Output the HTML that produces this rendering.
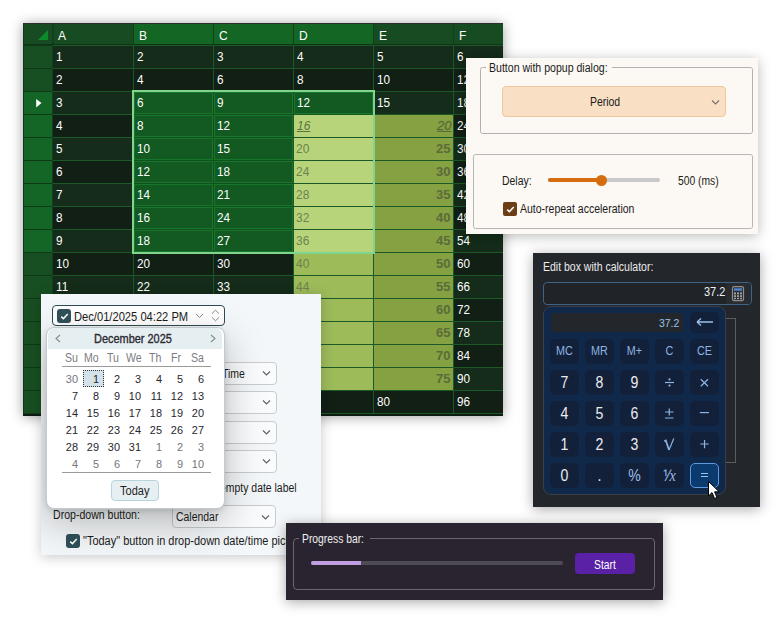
<!DOCTYPE html><html><head><meta charset="utf-8"><style>
*{box-sizing:border-box;margin:0;padding:0}
html,body{width:783px;height:628px;overflow:hidden;background:#fff;font-family:"Liberation Sans",sans-serif;position:relative}
.a{position:absolute}
.t{position:absolute;white-space:nowrap;transform-origin:0 0}

</style></head><body>
<div class="a" style="left:23px;top:23px;width:480px;height:393px;overflow:hidden;background:#163d1d;box-shadow:0 1px 12px rgba(0,0,0,0.38)">
<div class="a" style="left:0px;top:0px;width:480px;height:1px;background:#2e2e2e;"></div>
<div class="a" style="left:0px;top:1px;width:480px;height:21px;background:#123f1c;"></div>
<div class="a" style="left:0px;top:1px;width:29px;height:20px;background:#174b22;"></div>
<div class="a" style="left:31px;top:1px;width:79px;height:20px;background:#174b22;"></div>
<div class="t" style="left:35px;top:6.5px;font-size:12px;line-height:12px;color:#fff;">A</div>
<div class="a" style="left:111px;top:1px;width:79px;height:20px;background:#136624;"></div>
<div class="t" style="left:116px;top:6.5px;font-size:12px;line-height:12px;color:#fff;">B</div>
<div class="a" style="left:191px;top:1px;width:79px;height:20px;background:#136624;"></div>
<div class="t" style="left:196px;top:6.5px;font-size:12px;line-height:12px;color:#fff;">C</div>
<div class="a" style="left:271px;top:1px;width:79px;height:20px;background:#136624;"></div>
<div class="t" style="left:276px;top:6.5px;font-size:12px;line-height:12px;color:#fff;">D</div>
<div class="a" style="left:351px;top:1px;width:79px;height:20px;background:#174b22;"></div>
<div class="t" style="left:356px;top:6.5px;font-size:12px;line-height:12px;color:#fff;">E</div>
<div class="a" style="left:431px;top:1px;width:49px;height:20px;background:#174b22;"></div>
<div class="t" style="left:436px;top:6.5px;font-size:12px;line-height:12px;color:#fff;">F</div>
<svg class="a" style="left:15px;top:7px" width="10" height="10"><polygon points="10,0 10,10 0,10" fill="#0d8a2c"/></svg>
<div class="a" style="left:0px;top:21px;width:480px;height:1px;background:#0f3317;"></div>
<div class="a" style="left:0px;top:22px;width:30px;height:23px;background:#0f3a18;"></div>
<div class="a" style="left:0px;top:23px;width:30px;height:22px;background:#174f22;"></div>
<div class="a" style="left:30px;top:22px;width:450px;height:1px;background:#1b5a26;"></div>
<div class="a" style="left:30px;top:23px;width:80px;height:22px;background:#142c19;"></div>
<div class="t" style="left:33px;top:27px;font-size:13px;line-height:13px;color:#fff;transform:scaleX(0.9)">1</div>
<div class="a" style="left:110px;top:22px;width:1px;height:23px;background:#1b5a26;"></div>
<div class="a" style="left:111px;top:23px;width:79px;height:22px;background:#142c19;"></div>
<div class="t" style="left:114px;top:27px;font-size:13px;line-height:13px;color:#fff;transform:scaleX(0.9)">2</div>
<div class="a" style="left:190px;top:22px;width:1px;height:23px;background:#1b5a26;"></div>
<div class="a" style="left:191px;top:23px;width:79px;height:22px;background:#142c19;"></div>
<div class="t" style="left:194px;top:27px;font-size:13px;line-height:13px;color:#fff;transform:scaleX(0.9)">3</div>
<div class="a" style="left:270px;top:22px;width:1px;height:23px;background:#1b5a26;"></div>
<div class="a" style="left:271px;top:23px;width:79px;height:22px;background:#142c19;"></div>
<div class="t" style="left:274px;top:27px;font-size:13px;line-height:13px;color:#fff;transform:scaleX(0.9)">4</div>
<div class="a" style="left:350px;top:22px;width:1px;height:23px;background:#1b5a26;"></div>
<div class="a" style="left:351px;top:23px;width:79px;height:22px;background:#142c19;"></div>
<div class="t" style="left:354px;top:27px;font-size:13px;line-height:13px;color:#fff;transform:scaleX(0.9)">5</div>
<div class="a" style="left:430px;top:22px;width:1px;height:23px;background:#1b5a26;"></div>
<div class="a" style="left:431px;top:23px;width:49px;height:22px;background:#142c19;"></div>
<div class="t" style="left:434px;top:27px;font-size:13px;line-height:13px;color:#fff;transform:scaleX(0.9)">6</div>
<div class="a" style="left:0px;top:45px;width:30px;height:23px;background:#0f3a18;"></div>
<div class="a" style="left:0px;top:46px;width:30px;height:22px;background:#174f22;"></div>
<div class="a" style="left:30px;top:45px;width:450px;height:1px;background:#1b5a26;"></div>
<div class="a" style="left:30px;top:46px;width:80px;height:22px;background:#111f15;"></div>
<div class="t" style="left:33px;top:50px;font-size:13px;line-height:13px;color:#fff;transform:scaleX(0.9)">2</div>
<div class="a" style="left:110px;top:45px;width:1px;height:23px;background:#1b5a26;"></div>
<div class="a" style="left:111px;top:46px;width:79px;height:22px;background:#111f15;"></div>
<div class="t" style="left:114px;top:50px;font-size:13px;line-height:13px;color:#fff;transform:scaleX(0.9)">4</div>
<div class="a" style="left:190px;top:45px;width:1px;height:23px;background:#1b5a26;"></div>
<div class="a" style="left:191px;top:46px;width:79px;height:22px;background:#111f15;"></div>
<div class="t" style="left:194px;top:50px;font-size:13px;line-height:13px;color:#fff;transform:scaleX(0.9)">6</div>
<div class="a" style="left:270px;top:45px;width:1px;height:23px;background:#1b5a26;"></div>
<div class="a" style="left:271px;top:46px;width:79px;height:22px;background:#111f15;"></div>
<div class="t" style="left:274px;top:50px;font-size:13px;line-height:13px;color:#fff;transform:scaleX(0.9)">8</div>
<div class="a" style="left:350px;top:45px;width:1px;height:23px;background:#1b5a26;"></div>
<div class="a" style="left:351px;top:46px;width:79px;height:22px;background:#111f15;"></div>
<div class="t" style="left:354px;top:50px;font-size:13px;line-height:13px;color:#fff;transform:scaleX(0.9)">10</div>
<div class="a" style="left:430px;top:45px;width:1px;height:23px;background:#1b5a26;"></div>
<div class="a" style="left:431px;top:46px;width:49px;height:22px;background:#111f15;"></div>
<div class="t" style="left:434px;top:50px;font-size:13px;line-height:13px;color:#fff;transform:scaleX(0.9)">12</div>
<div class="a" style="left:0px;top:68px;width:30px;height:23px;background:#0f3a18;"></div>
<div class="a" style="left:0px;top:69px;width:30px;height:22px;background:#136625;"></div>
<svg class="a" style="left:12px;top:75px" width="8" height="11"><polygon points="1.2,1 6.5,5 1.2,9.5" fill="#fff"/></svg>
<div class="a" style="left:30px;top:68px;width:450px;height:1px;background:#1b5a26;"></div>
<div class="a" style="left:30px;top:69px;width:80px;height:22px;background:#142c19;"></div>
<div class="t" style="left:33px;top:73px;font-size:13px;line-height:13px;color:#fff;transform:scaleX(0.9)">3</div>
<div class="a" style="left:110px;top:68px;width:1px;height:23px;background:#1b5a26;"></div>
<div class="a" style="left:111px;top:68px;width:79px;height:23px;background:#11501f;"></div>
<div class="a" style="left:111px;top:69px;width:79px;height:22px;background:#135a22;box-shadow:inset 0 0 0 1px #18762a"></div>
<div class="t" style="left:114px;top:73px;font-size:13px;line-height:13px;color:#fff;transform:scaleX(0.9)">6</div>
<div class="a" style="left:190px;top:68px;width:1px;height:23px;background:#1b5a26;"></div>
<div class="a" style="left:190px;top:68px;width:80px;height:23px;background:#11501f;"></div>
<div class="a" style="left:191px;top:69px;width:79px;height:22px;background:#135a22;box-shadow:inset 0 0 0 1px #18762a"></div>
<div class="t" style="left:194px;top:73px;font-size:13px;line-height:13px;color:#fff;transform:scaleX(0.9)">9</div>
<div class="a" style="left:270px;top:68px;width:1px;height:23px;background:#1b5a26;"></div>
<div class="a" style="left:270px;top:68px;width:80px;height:23px;background:#11501f;"></div>
<div class="a" style="left:271px;top:69px;width:79px;height:22px;background:#135a22;box-shadow:inset 0 0 0 1px #18762a"></div>
<div class="t" style="left:274px;top:73px;font-size:13px;line-height:13px;color:#fff;transform:scaleX(0.9)">12</div>
<div class="a" style="left:350px;top:68px;width:1px;height:23px;background:#1b5a26;"></div>
<div class="a" style="left:351px;top:69px;width:79px;height:22px;background:#142c19;"></div>
<div class="t" style="left:354px;top:73px;font-size:13px;line-height:13px;color:#fff;transform:scaleX(0.9)">15</div>
<div class="a" style="left:430px;top:68px;width:1px;height:23px;background:#1b5a26;"></div>
<div class="a" style="left:431px;top:69px;width:49px;height:22px;background:#142c19;"></div>
<div class="t" style="left:434px;top:73px;font-size:13px;line-height:13px;color:#fff;transform:scaleX(0.9)">18</div>
<div class="a" style="left:0px;top:91px;width:30px;height:23px;background:#0f3a18;"></div>
<div class="a" style="left:0px;top:92px;width:30px;height:22px;background:#136625;"></div>
<div class="a" style="left:30px;top:91px;width:450px;height:1px;background:#1b5a26;"></div>
<div class="a" style="left:30px;top:92px;width:80px;height:22px;background:#111f15;"></div>
<div class="t" style="left:33px;top:96px;font-size:13px;line-height:13px;color:#fff;transform:scaleX(0.9)">4</div>
<div class="a" style="left:110px;top:91px;width:1px;height:23px;background:#1b5a26;"></div>
<div class="a" style="left:111px;top:91px;width:79px;height:23px;background:#11501f;"></div>
<div class="a" style="left:111px;top:92px;width:79px;height:22px;background:#135a22;box-shadow:inset 0 0 0 1px #18762a"></div>
<div class="t" style="left:114px;top:96px;font-size:13px;line-height:13px;color:#fff;transform:scaleX(0.9)">8</div>
<div class="a" style="left:190px;top:91px;width:1px;height:23px;background:#1b5a26;"></div>
<div class="a" style="left:190px;top:91px;width:80px;height:23px;background:#11501f;"></div>
<div class="a" style="left:191px;top:92px;width:79px;height:22px;background:#135a22;box-shadow:inset 0 0 0 1px #18762a"></div>
<div class="t" style="left:194px;top:96px;font-size:13px;line-height:13px;color:#fff;transform:scaleX(0.9)">12</div>
<div class="a" style="left:270px;top:91px;width:1px;height:23px;background:#1b5a26;"></div>
<div class="a" style="left:271px;top:92px;width:79px;height:22px;background:#b7d47b;"></div>
<div class="t" style="left:274px;top:96px;font-size:13px;line-height:13px;color:#5f7342;font-style:italic;text-decoration:underline;transform:scaleX(0.92)">16</div>
<div class="a" style="left:350px;top:91px;width:1px;height:23px;background:#1b5a26;"></div>
<div class="a" style="left:351px;top:92px;width:79px;height:22px;background:#86a142;"></div>
<div class="t" style="left:351px;width:77.5px;text-align:right;top:96px;font-size:13px;line-height:13px;color:#5b6b3a;font-style:italic;text-decoration:underline;-webkit-text-stroke:0.3px #5b6b3a;">20</div>
<div class="a" style="left:430px;top:91px;width:1px;height:23px;background:#1b5a26;"></div>
<div class="a" style="left:431px;top:92px;width:49px;height:22px;background:#111f15;"></div>
<div class="t" style="left:434px;top:96px;font-size:13px;line-height:13px;color:#fff;transform:scaleX(0.9)">24</div>
<div class="a" style="left:0px;top:114px;width:30px;height:23px;background:#0f3a18;"></div>
<div class="a" style="left:0px;top:115px;width:30px;height:22px;background:#136625;"></div>
<div class="a" style="left:30px;top:114px;width:450px;height:1px;background:#1b5a26;"></div>
<div class="a" style="left:30px;top:115px;width:80px;height:22px;background:#142c19;"></div>
<div class="t" style="left:33px;top:119px;font-size:13px;line-height:13px;color:#fff;transform:scaleX(0.9)">5</div>
<div class="a" style="left:110px;top:114px;width:1px;height:23px;background:#1b5a26;"></div>
<div class="a" style="left:111px;top:114px;width:79px;height:23px;background:#11501f;"></div>
<div class="a" style="left:111px;top:115px;width:79px;height:22px;background:#135a22;box-shadow:inset 0 0 0 1px #18762a"></div>
<div class="t" style="left:114px;top:119px;font-size:13px;line-height:13px;color:#fff;transform:scaleX(0.9)">10</div>
<div class="a" style="left:190px;top:114px;width:1px;height:23px;background:#1b5a26;"></div>
<div class="a" style="left:190px;top:114px;width:80px;height:23px;background:#11501f;"></div>
<div class="a" style="left:191px;top:115px;width:79px;height:22px;background:#135a22;box-shadow:inset 0 0 0 1px #18762a"></div>
<div class="t" style="left:194px;top:119px;font-size:13px;line-height:13px;color:#fff;transform:scaleX(0.9)">15</div>
<div class="a" style="left:270px;top:114px;width:1px;height:23px;background:#1b5a26;"></div>
<div class="a" style="left:271px;top:115px;width:79px;height:22px;background:#b7d47b;"></div>
<div class="t" style="left:273px;top:119px;font-size:13px;line-height:13px;color:#6d834b;transform:scaleX(0.92)">20</div>
<div class="a" style="left:350px;top:114px;width:1px;height:23px;background:#1b5a26;"></div>
<div class="a" style="left:351px;top:115px;width:79px;height:22px;background:#86a142;"></div>
<div class="t" style="left:351px;width:76.5px;text-align:right;top:119px;font-size:13px;line-height:13px;color:#5b6b3a;font-weight:bold;">25</div>
<div class="a" style="left:430px;top:114px;width:1px;height:23px;background:#1b5a26;"></div>
<div class="a" style="left:431px;top:115px;width:49px;height:22px;background:#142c19;"></div>
<div class="t" style="left:434px;top:119px;font-size:13px;line-height:13px;color:#fff;transform:scaleX(0.9)">30</div>
<div class="a" style="left:0px;top:137px;width:30px;height:23px;background:#0f3a18;"></div>
<div class="a" style="left:0px;top:138px;width:30px;height:22px;background:#136625;"></div>
<div class="a" style="left:30px;top:137px;width:450px;height:1px;background:#1b5a26;"></div>
<div class="a" style="left:30px;top:138px;width:80px;height:22px;background:#111f15;"></div>
<div class="t" style="left:33px;top:142px;font-size:13px;line-height:13px;color:#fff;transform:scaleX(0.9)">6</div>
<div class="a" style="left:110px;top:137px;width:1px;height:23px;background:#1b5a26;"></div>
<div class="a" style="left:111px;top:137px;width:79px;height:23px;background:#11501f;"></div>
<div class="a" style="left:111px;top:138px;width:79px;height:22px;background:#135a22;box-shadow:inset 0 0 0 1px #18762a"></div>
<div class="t" style="left:114px;top:142px;font-size:13px;line-height:13px;color:#fff;transform:scaleX(0.9)">12</div>
<div class="a" style="left:190px;top:137px;width:1px;height:23px;background:#1b5a26;"></div>
<div class="a" style="left:190px;top:137px;width:80px;height:23px;background:#11501f;"></div>
<div class="a" style="left:191px;top:138px;width:79px;height:22px;background:#135a22;box-shadow:inset 0 0 0 1px #18762a"></div>
<div class="t" style="left:194px;top:142px;font-size:13px;line-height:13px;color:#fff;transform:scaleX(0.9)">18</div>
<div class="a" style="left:270px;top:137px;width:1px;height:23px;background:#1b5a26;"></div>
<div class="a" style="left:271px;top:138px;width:79px;height:22px;background:#b7d47b;"></div>
<div class="t" style="left:273px;top:142px;font-size:13px;line-height:13px;color:#6d834b;transform:scaleX(0.92)">24</div>
<div class="a" style="left:350px;top:137px;width:1px;height:23px;background:#1b5a26;"></div>
<div class="a" style="left:351px;top:138px;width:79px;height:22px;background:#86a142;"></div>
<div class="t" style="left:351px;width:76.5px;text-align:right;top:142px;font-size:13px;line-height:13px;color:#5b6b3a;font-weight:bold;">30</div>
<div class="a" style="left:430px;top:137px;width:1px;height:23px;background:#1b5a26;"></div>
<div class="a" style="left:431px;top:138px;width:49px;height:22px;background:#111f15;"></div>
<div class="t" style="left:434px;top:142px;font-size:13px;line-height:13px;color:#fff;transform:scaleX(0.9)">36</div>
<div class="a" style="left:0px;top:160px;width:30px;height:23px;background:#0f3a18;"></div>
<div class="a" style="left:0px;top:161px;width:30px;height:22px;background:#136625;"></div>
<div class="a" style="left:30px;top:160px;width:450px;height:1px;background:#1b5a26;"></div>
<div class="a" style="left:30px;top:161px;width:80px;height:22px;background:#142c19;"></div>
<div class="t" style="left:33px;top:165px;font-size:13px;line-height:13px;color:#fff;transform:scaleX(0.9)">7</div>
<div class="a" style="left:110px;top:160px;width:1px;height:23px;background:#1b5a26;"></div>
<div class="a" style="left:111px;top:160px;width:79px;height:23px;background:#11501f;"></div>
<div class="a" style="left:111px;top:161px;width:79px;height:22px;background:#135a22;box-shadow:inset 0 0 0 1px #18762a"></div>
<div class="t" style="left:114px;top:165px;font-size:13px;line-height:13px;color:#fff;transform:scaleX(0.9)">14</div>
<div class="a" style="left:190px;top:160px;width:1px;height:23px;background:#1b5a26;"></div>
<div class="a" style="left:190px;top:160px;width:80px;height:23px;background:#11501f;"></div>
<div class="a" style="left:191px;top:161px;width:79px;height:22px;background:#135a22;box-shadow:inset 0 0 0 1px #18762a"></div>
<div class="t" style="left:194px;top:165px;font-size:13px;line-height:13px;color:#fff;transform:scaleX(0.9)">21</div>
<div class="a" style="left:270px;top:160px;width:1px;height:23px;background:#1b5a26;"></div>
<div class="a" style="left:271px;top:161px;width:79px;height:22px;background:#b7d47b;"></div>
<div class="t" style="left:273px;top:165px;font-size:13px;line-height:13px;color:#6d834b;transform:scaleX(0.92)">28</div>
<div class="a" style="left:350px;top:160px;width:1px;height:23px;background:#1b5a26;"></div>
<div class="a" style="left:351px;top:161px;width:79px;height:22px;background:#86a142;"></div>
<div class="t" style="left:351px;width:76.5px;text-align:right;top:165px;font-size:13px;line-height:13px;color:#5b6b3a;font-weight:bold;">35</div>
<div class="a" style="left:430px;top:160px;width:1px;height:23px;background:#1b5a26;"></div>
<div class="a" style="left:431px;top:161px;width:49px;height:22px;background:#142c19;"></div>
<div class="t" style="left:434px;top:165px;font-size:13px;line-height:13px;color:#fff;transform:scaleX(0.9)">42</div>
<div class="a" style="left:0px;top:183px;width:30px;height:23px;background:#0f3a18;"></div>
<div class="a" style="left:0px;top:184px;width:30px;height:22px;background:#136625;"></div>
<div class="a" style="left:30px;top:183px;width:450px;height:1px;background:#1b5a26;"></div>
<div class="a" style="left:30px;top:184px;width:80px;height:22px;background:#111f15;"></div>
<div class="t" style="left:33px;top:188px;font-size:13px;line-height:13px;color:#fff;transform:scaleX(0.9)">8</div>
<div class="a" style="left:110px;top:183px;width:1px;height:23px;background:#1b5a26;"></div>
<div class="a" style="left:111px;top:183px;width:79px;height:23px;background:#11501f;"></div>
<div class="a" style="left:111px;top:184px;width:79px;height:22px;background:#135a22;box-shadow:inset 0 0 0 1px #18762a"></div>
<div class="t" style="left:114px;top:188px;font-size:13px;line-height:13px;color:#fff;transform:scaleX(0.9)">16</div>
<div class="a" style="left:190px;top:183px;width:1px;height:23px;background:#1b5a26;"></div>
<div class="a" style="left:190px;top:183px;width:80px;height:23px;background:#11501f;"></div>
<div class="a" style="left:191px;top:184px;width:79px;height:22px;background:#135a22;box-shadow:inset 0 0 0 1px #18762a"></div>
<div class="t" style="left:194px;top:188px;font-size:13px;line-height:13px;color:#fff;transform:scaleX(0.9)">24</div>
<div class="a" style="left:270px;top:183px;width:1px;height:23px;background:#1b5a26;"></div>
<div class="a" style="left:271px;top:184px;width:79px;height:22px;background:#b7d47b;"></div>
<div class="t" style="left:273px;top:188px;font-size:13px;line-height:13px;color:#6d834b;transform:scaleX(0.92)">32</div>
<div class="a" style="left:350px;top:183px;width:1px;height:23px;background:#1b5a26;"></div>
<div class="a" style="left:351px;top:184px;width:79px;height:22px;background:#86a142;"></div>
<div class="t" style="left:351px;width:76.5px;text-align:right;top:188px;font-size:13px;line-height:13px;color:#5b6b3a;font-weight:bold;">40</div>
<div class="a" style="left:430px;top:183px;width:1px;height:23px;background:#1b5a26;"></div>
<div class="a" style="left:431px;top:184px;width:49px;height:22px;background:#111f15;"></div>
<div class="t" style="left:434px;top:188px;font-size:13px;line-height:13px;color:#fff;transform:scaleX(0.9)">48</div>
<div class="a" style="left:0px;top:206px;width:30px;height:23px;background:#0f3a18;"></div>
<div class="a" style="left:0px;top:207px;width:30px;height:22px;background:#136625;"></div>
<div class="a" style="left:30px;top:206px;width:450px;height:1px;background:#1b5a26;"></div>
<div class="a" style="left:30px;top:207px;width:80px;height:22px;background:#142c19;"></div>
<div class="t" style="left:33px;top:211px;font-size:13px;line-height:13px;color:#fff;transform:scaleX(0.9)">9</div>
<div class="a" style="left:110px;top:206px;width:1px;height:23px;background:#1b5a26;"></div>
<div class="a" style="left:111px;top:206px;width:79px;height:23px;background:#11501f;"></div>
<div class="a" style="left:111px;top:207px;width:79px;height:22px;background:#135a22;box-shadow:inset 0 0 0 1px #18762a"></div>
<div class="t" style="left:114px;top:211px;font-size:13px;line-height:13px;color:#fff;transform:scaleX(0.9)">18</div>
<div class="a" style="left:190px;top:206px;width:1px;height:23px;background:#1b5a26;"></div>
<div class="a" style="left:190px;top:206px;width:80px;height:23px;background:#11501f;"></div>
<div class="a" style="left:191px;top:207px;width:79px;height:22px;background:#135a22;box-shadow:inset 0 0 0 1px #18762a"></div>
<div class="t" style="left:194px;top:211px;font-size:13px;line-height:13px;color:#fff;transform:scaleX(0.9)">27</div>
<div class="a" style="left:270px;top:206px;width:1px;height:23px;background:#1b5a26;"></div>
<div class="a" style="left:271px;top:207px;width:79px;height:22px;background:#b7d47b;"></div>
<div class="t" style="left:273px;top:211px;font-size:13px;line-height:13px;color:#6d834b;transform:scaleX(0.92)">36</div>
<div class="a" style="left:350px;top:206px;width:1px;height:23px;background:#1b5a26;"></div>
<div class="a" style="left:351px;top:207px;width:79px;height:22px;background:#86a142;"></div>
<div class="t" style="left:351px;width:76.5px;text-align:right;top:211px;font-size:13px;line-height:13px;color:#5b6b3a;font-weight:bold;">45</div>
<div class="a" style="left:430px;top:206px;width:1px;height:23px;background:#1b5a26;"></div>
<div class="a" style="left:431px;top:207px;width:49px;height:22px;background:#142c19;"></div>
<div class="t" style="left:434px;top:211px;font-size:13px;line-height:13px;color:#fff;transform:scaleX(0.9)">54</div>
<div class="a" style="left:0px;top:229px;width:30px;height:23px;background:#0f3a18;"></div>
<div class="a" style="left:0px;top:230px;width:30px;height:22px;background:#174f22;"></div>
<div class="a" style="left:30px;top:229px;width:450px;height:1px;background:#1b5a26;"></div>
<div class="a" style="left:30px;top:230px;width:80px;height:22px;background:#111f15;"></div>
<div class="t" style="left:33px;top:234px;font-size:13px;line-height:13px;color:#fff;transform:scaleX(0.9)">10</div>
<div class="a" style="left:110px;top:229px;width:1px;height:23px;background:#1b5a26;"></div>
<div class="a" style="left:111px;top:230px;width:79px;height:22px;background:#111f15;"></div>
<div class="t" style="left:114px;top:234px;font-size:13px;line-height:13px;color:#fff;transform:scaleX(0.9)">20</div>
<div class="a" style="left:190px;top:229px;width:1px;height:23px;background:#1b5a26;"></div>
<div class="a" style="left:191px;top:230px;width:79px;height:22px;background:#111f15;"></div>
<div class="t" style="left:194px;top:234px;font-size:13px;line-height:13px;color:#fff;transform:scaleX(0.9)">30</div>
<div class="a" style="left:270px;top:229px;width:1px;height:23px;background:#1b5a26;"></div>
<div class="a" style="left:271px;top:230px;width:79px;height:22px;background:#9ebb5a;"></div>
<div class="t" style="left:273px;top:234px;font-size:13px;line-height:13px;color:#6d834b;transform:scaleX(0.92)">40</div>
<div class="a" style="left:350px;top:229px;width:1px;height:23px;background:#1b5a26;"></div>
<div class="a" style="left:351px;top:230px;width:79px;height:22px;background:#86a142;"></div>
<div class="t" style="left:351px;width:76.5px;text-align:right;top:234px;font-size:13px;line-height:13px;color:#5b6b3a;font-weight:bold;">50</div>
<div class="a" style="left:430px;top:229px;width:1px;height:23px;background:#1b5a26;"></div>
<div class="a" style="left:431px;top:230px;width:49px;height:22px;background:#111f15;"></div>
<div class="t" style="left:434px;top:234px;font-size:13px;line-height:13px;color:#fff;transform:scaleX(0.9)">60</div>
<div class="a" style="left:0px;top:252px;width:30px;height:23px;background:#0f3a18;"></div>
<div class="a" style="left:0px;top:253px;width:30px;height:22px;background:#174f22;"></div>
<div class="a" style="left:30px;top:252px;width:450px;height:1px;background:#1b5a26;"></div>
<div class="a" style="left:30px;top:253px;width:80px;height:22px;background:#142c19;"></div>
<div class="t" style="left:33px;top:257px;font-size:13px;line-height:13px;color:#fff;transform:scaleX(0.9)">11</div>
<div class="a" style="left:110px;top:252px;width:1px;height:23px;background:#1b5a26;"></div>
<div class="a" style="left:111px;top:253px;width:79px;height:22px;background:#142c19;"></div>
<div class="t" style="left:114px;top:257px;font-size:13px;line-height:13px;color:#fff;transform:scaleX(0.9)">22</div>
<div class="a" style="left:190px;top:252px;width:1px;height:23px;background:#1b5a26;"></div>
<div class="a" style="left:191px;top:253px;width:79px;height:22px;background:#142c19;"></div>
<div class="t" style="left:194px;top:257px;font-size:13px;line-height:13px;color:#fff;transform:scaleX(0.9)">33</div>
<div class="a" style="left:270px;top:252px;width:1px;height:23px;background:#1b5a26;"></div>
<div class="a" style="left:271px;top:253px;width:79px;height:22px;background:#9ebb5a;"></div>
<div class="t" style="left:273px;top:257px;font-size:13px;line-height:13px;color:#6d834b;transform:scaleX(0.92)">44</div>
<div class="a" style="left:350px;top:252px;width:1px;height:23px;background:#1b5a26;"></div>
<div class="a" style="left:351px;top:253px;width:79px;height:22px;background:#86a142;"></div>
<div class="t" style="left:351px;width:76.5px;text-align:right;top:257px;font-size:13px;line-height:13px;color:#5b6b3a;font-weight:bold;">55</div>
<div class="a" style="left:430px;top:252px;width:1px;height:23px;background:#1b5a26;"></div>
<div class="a" style="left:431px;top:253px;width:49px;height:22px;background:#142c19;"></div>
<div class="t" style="left:434px;top:257px;font-size:13px;line-height:13px;color:#fff;transform:scaleX(0.9)">66</div>
<div class="a" style="left:0px;top:275px;width:30px;height:23px;background:#0f3a18;"></div>
<div class="a" style="left:0px;top:276px;width:30px;height:22px;background:#174f22;"></div>
<div class="a" style="left:30px;top:275px;width:450px;height:1px;background:#1b5a26;"></div>
<div class="a" style="left:30px;top:276px;width:80px;height:22px;background:#111f15;"></div>
<div class="t" style="left:33px;top:280px;font-size:13px;line-height:13px;color:#fff;transform:scaleX(0.9)">12</div>
<div class="a" style="left:110px;top:275px;width:1px;height:23px;background:#1b5a26;"></div>
<div class="a" style="left:111px;top:276px;width:79px;height:22px;background:#111f15;"></div>
<div class="t" style="left:114px;top:280px;font-size:13px;line-height:13px;color:#fff;transform:scaleX(0.9)">24</div>
<div class="a" style="left:190px;top:275px;width:1px;height:23px;background:#1b5a26;"></div>
<div class="a" style="left:191px;top:276px;width:79px;height:22px;background:#111f15;"></div>
<div class="t" style="left:194px;top:280px;font-size:13px;line-height:13px;color:#fff;transform:scaleX(0.9)">36</div>
<div class="a" style="left:270px;top:275px;width:1px;height:23px;background:#1b5a26;"></div>
<div class="a" style="left:271px;top:276px;width:79px;height:22px;background:#9ebb5a;"></div>
<div class="t" style="left:273px;top:280px;font-size:13px;line-height:13px;color:#6d834b;transform:scaleX(0.92)">48</div>
<div class="a" style="left:350px;top:275px;width:1px;height:23px;background:#1b5a26;"></div>
<div class="a" style="left:351px;top:276px;width:79px;height:22px;background:#86a142;"></div>
<div class="t" style="left:351px;width:76.5px;text-align:right;top:280px;font-size:13px;line-height:13px;color:#5b6b3a;font-weight:bold;">60</div>
<div class="a" style="left:430px;top:275px;width:1px;height:23px;background:#1b5a26;"></div>
<div class="a" style="left:431px;top:276px;width:49px;height:22px;background:#111f15;"></div>
<div class="t" style="left:434px;top:280px;font-size:13px;line-height:13px;color:#fff;transform:scaleX(0.9)">72</div>
<div class="a" style="left:0px;top:298px;width:30px;height:23px;background:#0f3a18;"></div>
<div class="a" style="left:0px;top:299px;width:30px;height:22px;background:#174f22;"></div>
<div class="a" style="left:30px;top:298px;width:450px;height:1px;background:#1b5a26;"></div>
<div class="a" style="left:30px;top:299px;width:80px;height:22px;background:#142c19;"></div>
<div class="t" style="left:33px;top:303px;font-size:13px;line-height:13px;color:#fff;transform:scaleX(0.9)">13</div>
<div class="a" style="left:110px;top:298px;width:1px;height:23px;background:#1b5a26;"></div>
<div class="a" style="left:111px;top:299px;width:79px;height:22px;background:#142c19;"></div>
<div class="t" style="left:114px;top:303px;font-size:13px;line-height:13px;color:#fff;transform:scaleX(0.9)">26</div>
<div class="a" style="left:190px;top:298px;width:1px;height:23px;background:#1b5a26;"></div>
<div class="a" style="left:191px;top:299px;width:79px;height:22px;background:#142c19;"></div>
<div class="t" style="left:194px;top:303px;font-size:13px;line-height:13px;color:#fff;transform:scaleX(0.9)">39</div>
<div class="a" style="left:270px;top:298px;width:1px;height:23px;background:#1b5a26;"></div>
<div class="a" style="left:271px;top:299px;width:79px;height:22px;background:#9ebb5a;"></div>
<div class="t" style="left:273px;top:303px;font-size:13px;line-height:13px;color:#6d834b;transform:scaleX(0.92)">52</div>
<div class="a" style="left:350px;top:298px;width:1px;height:23px;background:#1b5a26;"></div>
<div class="a" style="left:351px;top:299px;width:79px;height:22px;background:#86a142;"></div>
<div class="t" style="left:351px;width:76.5px;text-align:right;top:303px;font-size:13px;line-height:13px;color:#5b6b3a;font-weight:bold;">65</div>
<div class="a" style="left:430px;top:298px;width:1px;height:23px;background:#1b5a26;"></div>
<div class="a" style="left:431px;top:299px;width:49px;height:22px;background:#142c19;"></div>
<div class="t" style="left:434px;top:303px;font-size:13px;line-height:13px;color:#fff;transform:scaleX(0.9)">78</div>
<div class="a" style="left:0px;top:321px;width:30px;height:23px;background:#0f3a18;"></div>
<div class="a" style="left:0px;top:322px;width:30px;height:22px;background:#174f22;"></div>
<div class="a" style="left:30px;top:321px;width:450px;height:1px;background:#1b5a26;"></div>
<div class="a" style="left:30px;top:322px;width:80px;height:22px;background:#111f15;"></div>
<div class="t" style="left:33px;top:326px;font-size:13px;line-height:13px;color:#fff;transform:scaleX(0.9)">14</div>
<div class="a" style="left:110px;top:321px;width:1px;height:23px;background:#1b5a26;"></div>
<div class="a" style="left:111px;top:322px;width:79px;height:22px;background:#111f15;"></div>
<div class="t" style="left:114px;top:326px;font-size:13px;line-height:13px;color:#fff;transform:scaleX(0.9)">28</div>
<div class="a" style="left:190px;top:321px;width:1px;height:23px;background:#1b5a26;"></div>
<div class="a" style="left:191px;top:322px;width:79px;height:22px;background:#111f15;"></div>
<div class="t" style="left:194px;top:326px;font-size:13px;line-height:13px;color:#fff;transform:scaleX(0.9)">42</div>
<div class="a" style="left:270px;top:321px;width:1px;height:23px;background:#1b5a26;"></div>
<div class="a" style="left:271px;top:322px;width:79px;height:22px;background:#9ebb5a;"></div>
<div class="t" style="left:273px;top:326px;font-size:13px;line-height:13px;color:#6d834b;transform:scaleX(0.92)">56</div>
<div class="a" style="left:350px;top:321px;width:1px;height:23px;background:#1b5a26;"></div>
<div class="a" style="left:351px;top:322px;width:79px;height:22px;background:#86a142;"></div>
<div class="t" style="left:351px;width:76.5px;text-align:right;top:326px;font-size:13px;line-height:13px;color:#5b6b3a;font-weight:bold;">70</div>
<div class="a" style="left:430px;top:321px;width:1px;height:23px;background:#1b5a26;"></div>
<div class="a" style="left:431px;top:322px;width:49px;height:22px;background:#111f15;"></div>
<div class="t" style="left:434px;top:326px;font-size:13px;line-height:13px;color:#fff;transform:scaleX(0.9)">84</div>
<div class="a" style="left:0px;top:344px;width:30px;height:23px;background:#0f3a18;"></div>
<div class="a" style="left:0px;top:345px;width:30px;height:22px;background:#174f22;"></div>
<div class="a" style="left:30px;top:344px;width:450px;height:1px;background:#1b5a26;"></div>
<div class="a" style="left:30px;top:345px;width:80px;height:22px;background:#142c19;"></div>
<div class="t" style="left:33px;top:349px;font-size:13px;line-height:13px;color:#fff;transform:scaleX(0.9)">15</div>
<div class="a" style="left:110px;top:344px;width:1px;height:23px;background:#1b5a26;"></div>
<div class="a" style="left:111px;top:345px;width:79px;height:22px;background:#142c19;"></div>
<div class="t" style="left:114px;top:349px;font-size:13px;line-height:13px;color:#fff;transform:scaleX(0.9)">30</div>
<div class="a" style="left:190px;top:344px;width:1px;height:23px;background:#1b5a26;"></div>
<div class="a" style="left:191px;top:345px;width:79px;height:22px;background:#142c19;"></div>
<div class="t" style="left:194px;top:349px;font-size:13px;line-height:13px;color:#fff;transform:scaleX(0.9)">45</div>
<div class="a" style="left:270px;top:344px;width:1px;height:23px;background:#1b5a26;"></div>
<div class="a" style="left:271px;top:345px;width:79px;height:22px;background:#9ebb5a;"></div>
<div class="t" style="left:273px;top:349px;font-size:13px;line-height:13px;color:#6d834b;transform:scaleX(0.92)">60</div>
<div class="a" style="left:350px;top:344px;width:1px;height:23px;background:#1b5a26;"></div>
<div class="a" style="left:351px;top:345px;width:79px;height:22px;background:#86a142;"></div>
<div class="t" style="left:351px;width:76.5px;text-align:right;top:349px;font-size:13px;line-height:13px;color:#5b6b3a;font-weight:bold;">75</div>
<div class="a" style="left:430px;top:344px;width:1px;height:23px;background:#1b5a26;"></div>
<div class="a" style="left:431px;top:345px;width:49px;height:22px;background:#142c19;"></div>
<div class="t" style="left:434px;top:349px;font-size:13px;line-height:13px;color:#fff;transform:scaleX(0.9)">90</div>
<div class="a" style="left:0px;top:367px;width:30px;height:23px;background:#0f3a18;"></div>
<div class="a" style="left:0px;top:368px;width:30px;height:22px;background:#174f22;"></div>
<div class="a" style="left:30px;top:367px;width:450px;height:1px;background:#1b5a26;"></div>
<div class="a" style="left:30px;top:368px;width:80px;height:22px;background:#111f15;"></div>
<div class="t" style="left:33px;top:372px;font-size:13px;line-height:13px;color:#fff;transform:scaleX(0.9)">16</div>
<div class="a" style="left:110px;top:367px;width:1px;height:23px;background:#1b5a26;"></div>
<div class="a" style="left:111px;top:368px;width:79px;height:22px;background:#111f15;"></div>
<div class="t" style="left:114px;top:372px;font-size:13px;line-height:13px;color:#fff;transform:scaleX(0.9)">32</div>
<div class="a" style="left:190px;top:367px;width:1px;height:23px;background:#1b5a26;"></div>
<div class="a" style="left:191px;top:368px;width:79px;height:22px;background:#111f15;"></div>
<div class="t" style="left:194px;top:372px;font-size:13px;line-height:13px;color:#fff;transform:scaleX(0.9)">48</div>
<div class="a" style="left:270px;top:367px;width:1px;height:23px;background:#1b5a26;"></div>
<div class="a" style="left:271px;top:368px;width:79px;height:22px;background:#111f15;"></div>
<div class="t" style="left:274px;top:372px;font-size:13px;line-height:13px;color:#fff;transform:scaleX(0.9)">64</div>
<div class="a" style="left:350px;top:367px;width:1px;height:23px;background:#1b5a26;"></div>
<div class="a" style="left:351px;top:368px;width:79px;height:22px;background:#111f15;"></div>
<div class="t" style="left:354px;top:372px;font-size:13px;line-height:13px;color:#fff;transform:scaleX(0.9)">80</div>
<div class="a" style="left:430px;top:367px;width:1px;height:23px;background:#1b5a26;"></div>
<div class="a" style="left:431px;top:368px;width:49px;height:22px;background:#111f15;"></div>
<div class="t" style="left:434px;top:372px;font-size:13px;line-height:13px;color:#fff;transform:scaleX(0.9)">96</div>
<div class="a" style="left:30px;top:390px;width:450px;height:1px;background:#1b5a26;"></div>
<div class="a" style="left:0px;top:391px;width:480px;height:2px;background:#0d1c10;"></div>
<div class="a" style="left:0px;top:1px;width:1px;height:390px;background:#0e3817;"></div>
<div class="a" style="left:29px;top:22px;width:1px;height:370px;background:#10401b;"></div>
<div class="a" style="left:109px;top:67px;width:243px;height:164px;border:2px solid #7fd48e"></div>
</div>
<div class="a" style="left:466px;top:58px;width:292px;height:176px;background:#fcf8f3;box-shadow:0 2px 12px rgba(0,0,0,0.28)"></div>
<div class="a" style="left:480px;top:67px;width:273px;height:67px;border:1px solid #b3b1af;border-radius:2.5px"></div>
<div class="a" style="left:486px;top:60px;width:126px;height:14px;background:#fcf8f3"></div>
<div class="t" style="left:489.00px;top:61.84px;font-size:12px;line-height:12px;color:#1b1b1b;transform:scaleX(0.88);">Button with popup dialog:</div>
<div class="a" style="left:502px;top:86px;width:224px;height:31px;background:#f9dfc3;border:1px solid #eec7a0;border-radius:4px"></div>
<div class="t" style="left:590.00px;top:95.84px;font-size:12px;line-height:12px;color:#1b1b1b;transform:scaleX(0.87);">Period</div>
<svg class="a" style="left:711px;top:99px" width="9" height="7"><polyline points="1,1.5 4.5,5 8,1.5" fill="none" stroke="#7a7068" stroke-width="1.1"/></svg>
<div class="a" style="left:473px;top:154px;width:280px;height:75px;border:1px solid #b8b6b4;border-radius:2.5px"></div>
<div class="t" style="left:502.00px;top:174.84px;font-size:12px;line-height:12px;color:#1b1b1b;transform:scaleX(0.87);">Delay:</div>
<div class="a" style="left:548px;top:178px;width:112px;height:4px;background:#c9c9c9;border-radius:2px"></div>
<div class="a" style="left:548px;top:178px;width:54px;height:4px;background:#d56c0e;border-radius:2px"></div>
<div class="a" style="left:595.5px;top:174.5px;width:11px;height:11px;background:#d56c0e;border-radius:50%"></div>
<div class="t" style="left:678.00px;top:174.84px;font-size:12px;line-height:12px;color:#1b1b1b;transform:scaleX(0.86);">500 (ms)</div>
<div class="a" style="left:503px;top:202px;width:14px;height:14px;background:#6b3e16;border-radius:2px"></div>
<svg class="a" style="left:503px;top:202px" width="14" height="14"><polyline points="4.2,7.6 6.4,9.6 10.8,5" fill="none" stroke="#fff" stroke-width="1.5"/></svg>
<div class="t" style="left:520.00px;top:202.84px;font-size:12px;line-height:12px;color:#1b1b1b;transform:scaleX(0.875);">Auto-repeat acceleration</div>
<div class="a" style="left:533px;top:253px;width:227px;height:254px;background:#23262b;box-shadow:0 2px 12px rgba(0,0,0,0.35)"></div>
<div class="t" style="left:543.00px;top:260.84px;font-size:12px;line-height:12px;color:#ececec;transform:scaleX(0.875);">Edit box with calculator:</div>
<div class="a" style="left:543px;top:282px;width:209px;height:23px;border:1px solid #3d6386;border-radius:4px;background:#202428"></div>
<div class="t" style="left:703.50px;top:285.72px;font-size:12.5px;line-height:12.5px;color:#f2f2f2;transform:scaleX(0.88);">37.2</div>
<div class="a" style="left:726px;top:283px;width:25px;height:21px;background:#282b30;border-radius:0 3px 3px 0"></div>
<svg class="a" style="left:731px;top:285px" width="14" height="17"><rect x="1.5" y="1.6" width="11" height="14" rx="1.6" fill="none" stroke="#8e8e8e" stroke-width="1.2"/><rect x="3" y="3.3" width="8" height="2.5" fill="#4f84cc"/>
<g fill="#a0a0a0"><rect x="3" y="7.4" width="2" height="2"/><rect x="6" y="7.4" width="2" height="2"/><rect x="9" y="7.4" width="2" height="2"/><rect x="3" y="10.2" width="2" height="2"/><rect x="6" y="10.2" width="2" height="2"/><rect x="9" y="10.2" width="2" height="2"/><rect x="3" y="13" width="2" height="1.2"/><rect x="6" y="13" width="2" height="1.2"/><rect x="9" y="13" width="2" height="1.2"/></g></svg>
<div class="a" style="left:700px;top:318px;width:36px;height:145px;border:1px solid #5c5c5c;border-left:none"></div>
<div class="a" style="left:543px;top:306px;width:183px;height:189px;background:#10294a;border:1px solid #3a3f46;border-radius:8px"></div>
<div class="a" style="left:551px;top:313px;width:132px;height:19px;background:#23272c;border-radius:3px"></div>
<div class="t" style="left:659.00px;top:318.19px;font-size:11px;line-height:11px;color:#9cc2ea;transform:scaleX(0.95);">37.2</div>
<div class="a" style="left:690px;top:312px;width:29px;height:21px;background:#13203a;border-radius:5px"></div>
<svg class="a" style="left:696px;top:317px" width="18" height="10"><path d="M1,5 H17 M1,5 L5,1.5 M1,5 L5,8.5" fill="none" stroke="#9cc2ea" stroke-width="1.3"/></svg>
<div class="a" style="left:550px;top:339px;width:29px;height:25px;background:#13203a;border-radius:5px"></div>
<div class="t" style="left:550px;top:339px;width:29px;height:24px;line-height:24px;text-align:center;font-size:12px;color:#8cb4e0;transform:scaleX(0.9);transform-origin:50% 50%">MC</div>
<div class="a" style="left:585px;top:339px;width:29px;height:25px;background:#13203a;border-radius:5px"></div>
<div class="t" style="left:585px;top:339px;width:29px;height:24px;line-height:24px;text-align:center;font-size:12px;color:#8cb4e0;transform:scaleX(0.9);transform-origin:50% 50%">MR</div>
<div class="a" style="left:620px;top:339px;width:29px;height:25px;background:#13203a;border-radius:5px"></div>
<div class="t" style="left:620px;top:339px;width:29px;height:24px;line-height:24px;text-align:center;font-size:12px;color:#8cb4e0;transform:scaleX(0.9);transform-origin:50% 50%">M+</div>
<div class="a" style="left:655px;top:339px;width:29px;height:25px;background:#13203a;border-radius:5px"></div>
<div class="t" style="left:655px;top:339px;width:29px;height:24px;line-height:24px;text-align:center;font-size:12px;color:#8cb4e0;transform:scaleX(0.9);transform-origin:50% 50%">C</div>
<div class="a" style="left:690px;top:339px;width:29px;height:25px;background:#13203a;border-radius:5px"></div>
<div class="t" style="left:690px;top:339px;width:29px;height:24px;line-height:24px;text-align:center;font-size:12px;color:#8cb4e0;transform:scaleX(0.9);transform-origin:50% 50%">CE</div>
<div class="a" style="left:550px;top:370px;width:29px;height:25px;background:#13203a;border-radius:5px"></div>
<div class="t" style="left:550px;top:371px;width:29px;height:24px;line-height:24px;text-align:center;font-size:16px;color:#ececec;transform:scaleX(0.88);transform-origin:50% 50%">7</div>
<div class="a" style="left:585px;top:370px;width:29px;height:25px;background:#13203a;border-radius:5px"></div>
<div class="t" style="left:585px;top:371px;width:29px;height:24px;line-height:24px;text-align:center;font-size:16px;color:#ececec;transform:scaleX(0.88);transform-origin:50% 50%">8</div>
<div class="a" style="left:620px;top:370px;width:29px;height:25px;background:#13203a;border-radius:5px"></div>
<div class="t" style="left:620px;top:371px;width:29px;height:24px;line-height:24px;text-align:center;font-size:16px;color:#ececec;transform:scaleX(0.88);transform-origin:50% 50%">9</div>
<div class="a" style="left:655px;top:370px;width:29px;height:25px;background:#13203a;border-radius:5px"></div>
<div class="a" style="left:690px;top:370px;width:29px;height:25px;background:#13203a;border-radius:5px"></div>
<div class="a" style="left:550px;top:401px;width:29px;height:25px;background:#13203a;border-radius:5px"></div>
<div class="t" style="left:550px;top:402px;width:29px;height:24px;line-height:24px;text-align:center;font-size:16px;color:#ececec;transform:scaleX(0.88);transform-origin:50% 50%">4</div>
<div class="a" style="left:585px;top:401px;width:29px;height:25px;background:#13203a;border-radius:5px"></div>
<div class="t" style="left:585px;top:402px;width:29px;height:24px;line-height:24px;text-align:center;font-size:16px;color:#ececec;transform:scaleX(0.88);transform-origin:50% 50%">5</div>
<div class="a" style="left:620px;top:401px;width:29px;height:25px;background:#13203a;border-radius:5px"></div>
<div class="t" style="left:620px;top:402px;width:29px;height:24px;line-height:24px;text-align:center;font-size:16px;color:#ececec;transform:scaleX(0.88);transform-origin:50% 50%">6</div>
<div class="a" style="left:655px;top:401px;width:29px;height:25px;background:#13203a;border-radius:5px"></div>
<div class="a" style="left:690px;top:401px;width:29px;height:25px;background:#13203a;border-radius:5px"></div>
<div class="a" style="left:550px;top:432px;width:29px;height:25px;background:#13203a;border-radius:5px"></div>
<div class="t" style="left:550px;top:433px;width:29px;height:24px;line-height:24px;text-align:center;font-size:16px;color:#ececec;transform:scaleX(0.88);transform-origin:50% 50%">1</div>
<div class="a" style="left:585px;top:432px;width:29px;height:25px;background:#13203a;border-radius:5px"></div>
<div class="t" style="left:585px;top:433px;width:29px;height:24px;line-height:24px;text-align:center;font-size:16px;color:#ececec;transform:scaleX(0.88);transform-origin:50% 50%">2</div>
<div class="a" style="left:620px;top:432px;width:29px;height:25px;background:#13203a;border-radius:5px"></div>
<div class="t" style="left:620px;top:433px;width:29px;height:24px;line-height:24px;text-align:center;font-size:16px;color:#ececec;transform:scaleX(0.88);transform-origin:50% 50%">3</div>
<div class="a" style="left:655px;top:432px;width:29px;height:25px;background:#13203a;border-radius:5px"></div>
<div class="a" style="left:690px;top:432px;width:29px;height:25px;background:#13203a;border-radius:5px"></div>
<div class="a" style="left:550px;top:463px;width:29px;height:25px;background:#13203a;border-radius:5px"></div>
<div class="t" style="left:550px;top:464px;width:29px;height:24px;line-height:24px;text-align:center;font-size:16px;color:#ececec;transform:scaleX(0.88);transform-origin:50% 50%">0</div>
<div class="a" style="left:585px;top:463px;width:29px;height:25px;background:#13203a;border-radius:5px"></div>
<div class="t" style="left:585px;top:464px;width:29px;height:24px;line-height:24px;text-align:center;font-size:16px;color:#ececec;transform:scaleX(0.88);transform-origin:50% 50%">.</div>
<div class="a" style="left:620px;top:463px;width:29px;height:25px;background:#13203a;border-radius:5px"></div>
<div class="t" style="left:620px;top:464px;width:29px;height:24px;line-height:24px;text-align:center;font-size:16px;color:#9cbfe6;transform:scaleX(0.88);transform-origin:50% 50%">%</div>
<div class="a" style="left:655px;top:463px;width:29px;height:25px;background:#13203a;border-radius:5px"></div>
<div class="t" style="left:655px;top:464px;width:29px;height:24px;line-height:24px;text-align:center;font-size:16px;color:#9cbfe6;transform:scaleX(0.88);transform-origin:50% 50%">⅟<span style="font-family:Liberation Serif;font-style:italic">x</span></div>
<div class="a" style="left:690px;top:463px;width:29px;height:25px;background:#0b3a6e;border:1px solid #5a9ae0;border-radius:5px"></div>
<svg class="a" style="left:700px;top:472px" width="10" height="7"><path d="M1,1.5 H8 M1,4.5 H8" stroke="#9cc2ea" stroke-width="1.1" fill="none"/></svg>
<svg class="a" style="left:0;top:0" width="783" height="628" fill="none" stroke="#8cb4e0" stroke-width="1.2"><path d="M665,382.5 H674" /><circle cx="669.5" cy="379.4" r="1.1" fill="#8cb4e0" stroke="none"/><circle cx="669.5" cy="385.6" r="1.1" fill="#8cb4e0" stroke="none"/><path d="M700.8,379.2 L708,386.2 M708,379.2 L700.8,386.2" /><path d="M665,412 H673.5 M669.25,408.5 V415.5 M665,418 H673.5" /><path d="M699.8,412.6 H709" /><path d="M664.3,441.2 L665.8,440.4 L669,450" stroke-width="1.7"/><path d="M669,450 L673.8,438.4" /><path d="M700.4,444 H708.7 M704.55,439.9 V448.2" /></svg>
<svg class="a" style="left:707px;top:480px" width="14" height="21"><path d="M1.5,1.5 L1.5,16 L5,12.6 L7.6,18.5 L10,17.5 L7.6,11.8 L12.2,11.8 Z" fill="#fff" stroke="#000" stroke-width="1"/></svg>
<div class="a" style="left:41px;top:294px;width:280px;height:261px;background:#f4f7f9;box-shadow:0 2px 12px rgba(0,0,0,0.22)"></div>
<div class="a" style="left:0;top:0;width:783px;height:628px;clip-path:inset(294px 462px 73px 41px)">
<div class="a" style="left:150px;top:362px;width:127px;height:23px;background:#fafbfc;border:1px solid #c9cbcd;border-radius:4px"></div>
<svg class="a" style="left:262px;top:370px" width="9" height="7"><polyline points="1,1.5 4.5,5 8,1.5" fill="none" stroke="#606060" stroke-width="1.1"/></svg>
<div class="a" style="left:150px;top:391px;width:127px;height:23px;background:#fafbfc;border:1px solid #c9cbcd;border-radius:4px"></div>
<svg class="a" style="left:262px;top:399px" width="9" height="7"><polyline points="1,1.5 4.5,5 8,1.5" fill="none" stroke="#606060" stroke-width="1.1"/></svg>
<div class="a" style="left:150px;top:421px;width:127px;height:23px;background:#fafbfc;border:1px solid #c9cbcd;border-radius:4px"></div>
<svg class="a" style="left:262px;top:429px" width="9" height="7"><polyline points="1,1.5 4.5,5 8,1.5" fill="none" stroke="#606060" stroke-width="1.1"/></svg>
<div class="a" style="left:150px;top:450px;width:127px;height:23px;background:#fafbfc;border:1px solid #c9cbcd;border-radius:4px"></div>
<svg class="a" style="left:262px;top:458px" width="9" height="7"><polyline points="1,1.5 4.5,5 8,1.5" fill="none" stroke="#606060" stroke-width="1.1"/></svg>
<div class="t" style="left:222.00px;top:367.54px;font-size:12px;line-height:12px;color:#1b1b1b;transform:scaleX(0.87);">Time</div>
<div class="t" style="left:220.00px;top:482.34px;font-size:12px;line-height:12px;color:#1b1b1b;transform:scaleX(0.87);">empty date label</div>
<div class="t" style="left:52.50px;top:508.84px;font-size:12px;line-height:12px;color:#1b1b1b;transform:scaleX(0.88);">Drop-down button:</div>
<div class="a" style="left:172px;top:505px;width:104px;height:23px;background:#fafbfc;border:1px solid #c9cbcd;border-radius:4px"></div>
<div class="t" style="left:175.50px;top:510.84px;font-size:12px;line-height:12px;color:#1b1b1b;transform:scaleX(0.87);">Calendar</div>
<svg class="a" style="left:261px;top:514px" width="9" height="7"><polyline points="1,1.5 4.5,5 8,1.5" fill="none" stroke="#606060" stroke-width="1.1"/></svg>
<div class="a" style="left:66px;top:534px;width:14px;height:14px;background:#2f505a;border-radius:3px"></div>
<svg class="a" style="left:66px;top:534px" width="14" height="14"><polyline points="4.2,7.6 6.4,9.6 10.8,5" fill="none" stroke="#fff" stroke-width="1.5"/></svg>
<div class="t" style="left:83.00px;top:534.54px;font-size:12px;line-height:12px;color:#1b1b1b;transform:scaleX(0.915);">"Today" button in drop-down date/time picker</div>
<div class="a" style="left:52px;top:305px;width:173px;height:21px;background:#fff;border:1px solid #2d4b55;border-radius:4px"></div>
<div class="a" style="left:57px;top:309px;width:14px;height:14px;background:#2f505a;border-radius:3px"></div>
<svg class="a" style="left:57px;top:309px" width="14" height="14"><polyline points="4.2,7.6 6.4,9.6 10.8,5" fill="none" stroke="#fff" stroke-width="1.5"/></svg>
<div class="t" style="left:74.00px;top:310.64px;font-size:12px;line-height:12px;color:#1b1b1b;transform:scaleX(0.93);">Dec/01/2025 04:22 PM</div>
<svg class="a" style="left:195px;top:313px" width="9" height="6"><polyline points="1,1 4.5,4.5 8,1" fill="none" stroke="#8a8a8a" stroke-width="1"/></svg>
<svg class="a" style="left:210px;top:308px" width="11" height="15"><polyline points="2,5.6 5.5,2.2 9,5.6" fill="none" stroke="#8a8a8a" stroke-width="1"/><polyline points="2,9.4 5.5,12.8 9,9.4" fill="none" stroke="#8a8a8a" stroke-width="1"/></svg>
<div class="a" style="left:46px;top:327px;width:179px;height:182px;background:#fff;border:1px solid #c3c9cc;border-radius:8px;box-shadow:0 14px 40px rgba(0,0,0,0.26), 0 2px 6px rgba(0,0,0,0.12)"></div>
<div class="a" style="left:48px;top:328px;width:174px;height:21px;background:#e5eef1;border-radius:7px 7px 0 0"></div>
<svg class="a" style="left:54px;top:334px" width="8" height="10"><polyline points="6,1 2,4.5 6,8" fill="none" stroke="#8a8a8a" stroke-width="1.1"/></svg>
<svg class="a" style="left:209px;top:334px" width="8" height="10"><polyline points="2,1 6,4.5 2,8" fill="none" stroke="#8a8a8a" stroke-width="1.1"/></svg>
<div class="t" style="left:94.30px;top:332.62px;font-size:12.5px;line-height:12.5px;color:#2a2a30;transform:scaleX(0.875);-webkit-text-stroke:0.35px #2a2a30">December 2025</div>
<div class="t" style="left:65.10px;top:351.84px;font-size:12px;line-height:12px;color:#7c7c82;transform:scaleX(0.88);">Su</div>
<div class="t" style="left:84.10px;top:351.84px;font-size:12px;line-height:12px;color:#7c7c82;transform:scaleX(0.88);">Mo</div>
<div class="t" style="left:106.50px;top:351.84px;font-size:12px;line-height:12px;color:#7c7c82;transform:scaleX(0.88);">Tu</div>
<div class="t" style="left:125.50px;top:351.84px;font-size:12px;line-height:12px;color:#7c7c82;transform:scaleX(0.88);">We</div>
<div class="t" style="left:149.00px;top:351.84px;font-size:12px;line-height:12px;color:#7c7c82;transform:scaleX(0.88);">Th</div>
<div class="t" style="left:171.30px;top:351.84px;font-size:12px;line-height:12px;color:#7c7c82;transform:scaleX(0.88);">Fr</div>
<div class="t" style="left:191.00px;top:351.84px;font-size:12px;line-height:12px;color:#7c7c82;transform:scaleX(0.88);">Sa</div>
<div class="a" style="left:62px;top:366px;width:149px;height:1px;background:#9a9a9a"></div>
<div class="a" style="left:62px;top:472px;width:149px;height:1px;background:#9a9a9a"></div>
<div class="a" style="left:83px;top:370px;width:21px;height:17px;background:#d3e2e8;border:1px dotted #333"></div>
<div class="t" style="left:37.3px;width:41px;text-align:right;top:373.04px;font-size:11.5px;line-height:12px;color:#74747a;transform:scaleX(0.95);transform-origin:100% 0">30</div>
<div class="t" style="left:58.1px;width:41px;text-align:right;top:373.04px;font-size:11.5px;line-height:12px;color:#26262e;transform:scaleX(0.95);transform-origin:100% 0">1</div>
<div class="t" style="left:79.2px;width:41px;text-align:right;top:373.04px;font-size:11.5px;line-height:12px;color:#26262e;transform:scaleX(0.95);transform-origin:100% 0">2</div>
<div class="t" style="left:100.0px;width:41px;text-align:right;top:373.04px;font-size:11.5px;line-height:12px;color:#26262e;transform:scaleX(0.95);transform-origin:100% 0">3</div>
<div class="t" style="left:120.9px;width:41px;text-align:right;top:373.04px;font-size:11.5px;line-height:12px;color:#26262e;transform:scaleX(0.95);transform-origin:100% 0">4</div>
<div class="t" style="left:141.9px;width:41px;text-align:right;top:373.04px;font-size:11.5px;line-height:12px;color:#26262e;transform:scaleX(0.95);transform-origin:100% 0">5</div>
<div class="t" style="left:163.4px;width:41px;text-align:right;top:373.04px;font-size:11.5px;line-height:12px;color:#26262e;transform:scaleX(0.95);transform-origin:100% 0">6</div>
<div class="t" style="left:37.3px;width:41px;text-align:right;top:390.04px;font-size:11.5px;line-height:12px;color:#26262e;transform:scaleX(0.95);transform-origin:100% 0">7</div>
<div class="t" style="left:58.1px;width:41px;text-align:right;top:390.04px;font-size:11.5px;line-height:12px;color:#26262e;transform:scaleX(0.95);transform-origin:100% 0">8</div>
<div class="t" style="left:79.2px;width:41px;text-align:right;top:390.04px;font-size:11.5px;line-height:12px;color:#26262e;transform:scaleX(0.95);transform-origin:100% 0">9</div>
<div class="t" style="left:100.0px;width:41px;text-align:right;top:390.04px;font-size:11.5px;line-height:12px;color:#26262e;transform:scaleX(0.95);transform-origin:100% 0">10</div>
<div class="t" style="left:120.9px;width:41px;text-align:right;top:390.04px;font-size:11.5px;line-height:12px;color:#26262e;transform:scaleX(0.95);transform-origin:100% 0">11</div>
<div class="t" style="left:141.9px;width:41px;text-align:right;top:390.04px;font-size:11.5px;line-height:12px;color:#26262e;transform:scaleX(0.95);transform-origin:100% 0">12</div>
<div class="t" style="left:163.4px;width:41px;text-align:right;top:390.04px;font-size:11.5px;line-height:12px;color:#26262e;transform:scaleX(0.95);transform-origin:100% 0">13</div>
<div class="t" style="left:37.3px;width:41px;text-align:right;top:407.04px;font-size:11.5px;line-height:12px;color:#26262e;transform:scaleX(0.95);transform-origin:100% 0">14</div>
<div class="t" style="left:58.1px;width:41px;text-align:right;top:407.04px;font-size:11.5px;line-height:12px;color:#26262e;transform:scaleX(0.95);transform-origin:100% 0">15</div>
<div class="t" style="left:79.2px;width:41px;text-align:right;top:407.04px;font-size:11.5px;line-height:12px;color:#26262e;transform:scaleX(0.95);transform-origin:100% 0">16</div>
<div class="t" style="left:100.0px;width:41px;text-align:right;top:407.04px;font-size:11.5px;line-height:12px;color:#26262e;transform:scaleX(0.95);transform-origin:100% 0">17</div>
<div class="t" style="left:120.9px;width:41px;text-align:right;top:407.04px;font-size:11.5px;line-height:12px;color:#26262e;transform:scaleX(0.95);transform-origin:100% 0">18</div>
<div class="t" style="left:141.9px;width:41px;text-align:right;top:407.04px;font-size:11.5px;line-height:12px;color:#26262e;transform:scaleX(0.95);transform-origin:100% 0">19</div>
<div class="t" style="left:163.4px;width:41px;text-align:right;top:407.04px;font-size:11.5px;line-height:12px;color:#26262e;transform:scaleX(0.95);transform-origin:100% 0">20</div>
<div class="t" style="left:37.3px;width:41px;text-align:right;top:424.04px;font-size:11.5px;line-height:12px;color:#26262e;transform:scaleX(0.95);transform-origin:100% 0">21</div>
<div class="t" style="left:58.1px;width:41px;text-align:right;top:424.04px;font-size:11.5px;line-height:12px;color:#26262e;transform:scaleX(0.95);transform-origin:100% 0">22</div>
<div class="t" style="left:79.2px;width:41px;text-align:right;top:424.04px;font-size:11.5px;line-height:12px;color:#26262e;transform:scaleX(0.95);transform-origin:100% 0">23</div>
<div class="t" style="left:100.0px;width:41px;text-align:right;top:424.04px;font-size:11.5px;line-height:12px;color:#26262e;transform:scaleX(0.95);transform-origin:100% 0">24</div>
<div class="t" style="left:120.9px;width:41px;text-align:right;top:424.04px;font-size:11.5px;line-height:12px;color:#26262e;transform:scaleX(0.95);transform-origin:100% 0">25</div>
<div class="t" style="left:141.9px;width:41px;text-align:right;top:424.04px;font-size:11.5px;line-height:12px;color:#26262e;transform:scaleX(0.95);transform-origin:100% 0">26</div>
<div class="t" style="left:163.4px;width:41px;text-align:right;top:424.04px;font-size:11.5px;line-height:12px;color:#26262e;transform:scaleX(0.95);transform-origin:100% 0">27</div>
<div class="t" style="left:37.3px;width:41px;text-align:right;top:441.04px;font-size:11.5px;line-height:12px;color:#26262e;transform:scaleX(0.95);transform-origin:100% 0">28</div>
<div class="t" style="left:58.1px;width:41px;text-align:right;top:441.04px;font-size:11.5px;line-height:12px;color:#26262e;transform:scaleX(0.95);transform-origin:100% 0">29</div>
<div class="t" style="left:79.2px;width:41px;text-align:right;top:441.04px;font-size:11.5px;line-height:12px;color:#26262e;transform:scaleX(0.95);transform-origin:100% 0">30</div>
<div class="t" style="left:100.0px;width:41px;text-align:right;top:441.04px;font-size:11.5px;line-height:12px;color:#26262e;transform:scaleX(0.95);transform-origin:100% 0">31</div>
<div class="t" style="left:120.9px;width:41px;text-align:right;top:441.04px;font-size:11.5px;line-height:12px;color:#74747a;transform:scaleX(0.95);transform-origin:100% 0">1</div>
<div class="t" style="left:141.9px;width:41px;text-align:right;top:441.04px;font-size:11.5px;line-height:12px;color:#74747a;transform:scaleX(0.95);transform-origin:100% 0">2</div>
<div class="t" style="left:163.4px;width:41px;text-align:right;top:441.04px;font-size:11.5px;line-height:12px;color:#74747a;transform:scaleX(0.95);transform-origin:100% 0">3</div>
<div class="t" style="left:37.3px;width:41px;text-align:right;top:458.04px;font-size:11.5px;line-height:12px;color:#74747a;transform:scaleX(0.95);transform-origin:100% 0">4</div>
<div class="t" style="left:58.1px;width:41px;text-align:right;top:458.04px;font-size:11.5px;line-height:12px;color:#74747a;transform:scaleX(0.95);transform-origin:100% 0">5</div>
<div class="t" style="left:79.2px;width:41px;text-align:right;top:458.04px;font-size:11.5px;line-height:12px;color:#74747a;transform:scaleX(0.95);transform-origin:100% 0">6</div>
<div class="t" style="left:100.0px;width:41px;text-align:right;top:458.04px;font-size:11.5px;line-height:12px;color:#74747a;transform:scaleX(0.95);transform-origin:100% 0">7</div>
<div class="t" style="left:120.9px;width:41px;text-align:right;top:458.04px;font-size:11.5px;line-height:12px;color:#74747a;transform:scaleX(0.95);transform-origin:100% 0">8</div>
<div class="t" style="left:141.9px;width:41px;text-align:right;top:458.04px;font-size:11.5px;line-height:12px;color:#74747a;transform:scaleX(0.95);transform-origin:100% 0">9</div>
<div class="t" style="left:163.4px;width:41px;text-align:right;top:458.04px;font-size:11.5px;line-height:12px;color:#74747a;transform:scaleX(0.95);transform-origin:100% 0">10</div>
<div class="a" style="left:111px;top:480px;width:48px;height:21px;background:#e6eff2;border:1px solid #b7d3db;border-radius:4px"></div>
<div class="t" style="left:119.50px;top:484.84px;font-size:12px;line-height:12px;color:#1f1f24;transform:scaleX(0.92);">Today</div>
</div>
<div class="a" style="left:286px;top:523px;width:377px;height:77px;background:#2a2431;box-shadow:0 2px 12px rgba(0,0,0,0.35)"></div>
<div class="a" style="left:293px;top:538px;width:362px;height:52px;border:1px solid #6b6570;border-radius:4px"></div>
<div class="a" style="left:299px;top:530px;width:71px;height:14px;background:#2a2431"></div>
<div class="t" style="left:301.50px;top:532.64px;font-size:12px;line-height:12px;color:#f0f0f0;transform:scaleX(0.86);">Progress bar:</div>
<div class="a" style="left:311px;top:561px;width:252px;height:4px;background:#4f4b52;border-radius:2px"></div>
<div class="a" style="left:311px;top:561px;width:50px;height:4px;background:#bf9fe0;border-radius:2px 0 0 2px"></div>
<div class="a" style="left:575px;top:553px;width:60px;height:21px;background:#5a21a6;border-radius:4px"></div>
<div class="t" style="left:593.50px;top:558.84px;font-size:12px;line-height:12px;color:#fff;transform:scaleX(0.86);">Start</div>
</body></html>
